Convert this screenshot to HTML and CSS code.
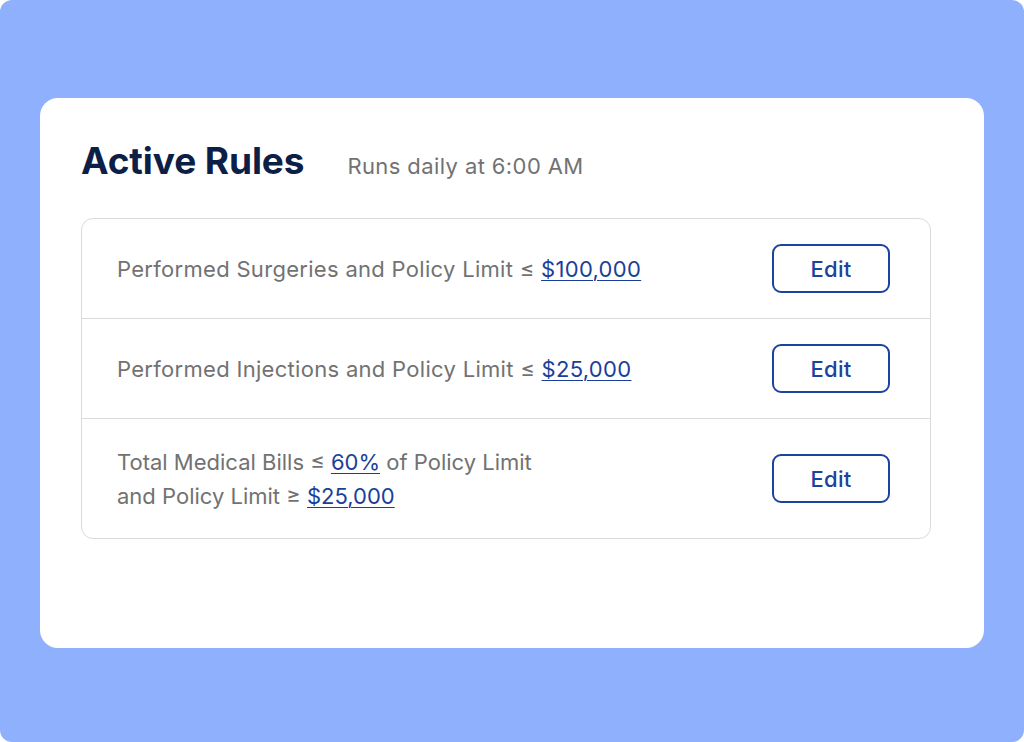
FILE: index.html
```html
<!DOCTYPE html>
<html>
<head>
<meta charset="utf-8">
<link rel="stylesheet" href="styles.css">
</head>
<body>
<div class="stage">
  <div class="card">
    <div class="header">
      <h1 class="title">Active Rules</h1>
      <span class="subtitle">Runs daily at 6:00 AM</span>
    </div>
    <div class="rules">
      <div class="rule">
        <div class="rule-text">Performed Surgeries and Policy Limit ≤ <a class="val">$100,000</a></div>
        <button class="edit">Edit</button>
      </div>
      <div class="rule">
        <div class="rule-text">Performed Injections and Policy Limit ≤ <a class="val">$25,000</a></div>
        <button class="edit">Edit</button>
      </div>
      <div class="rule rule-tall">
        <div class="rule-text rule-text-multi">Total Medical Bills ≤ <a class="val">60%</a> of Policy Limit<br>and Policy Limit ≥ <a class="val">$25,000</a></div>
        <button class="edit">Edit</button>
      </div>
    </div>
  </div>
</div>
</body>
</html>
```
FILE: styles.css
```css
html, body {
  margin: 0;
  padding: 0;
  background: #ffffff;
}
body {
  font-family: Inter, "Noto Sans", sans-serif;
}
.stage {
  width: 1024px;
  height: 742px;
  background: #8fb0fc;
  border-radius: 12px;
  box-sizing: border-box;
  padding: 98px 40px 0 40px;
}
.card {
  background: #ffffff;
  border-radius: 18px;
  height: 550px;
  box-sizing: border-box;
  padding: 0 53px 0 41px;
}
.header {
  display: flex;
  align-items: baseline;
  height: 120px;
  box-sizing: border-box;
  padding-top: 40px;
}
.title {
  margin: 0;
  font-size: 37px;
  line-height: 45px;
  font-weight: 700;
  color: #0c2047;
  letter-spacing: -0.1px;
}
.subtitle {
  margin-left: 43px;
  font-size: 22px;
  color: #727272;
  letter-spacing: 0.4px;
}
.rules {
  border: 1px solid #dadada;
  border-radius: 12px;
}
.rule {
  display: flex;
  align-items: center;
  justify-content: space-between;
  height: 100px;
  box-sizing: border-box;
  padding: 0 40px 0 35px;
  border-bottom: 1px solid #dadada;
}
.rule:last-child {
  border-bottom: none;
}
.rule-tall {
  height: 119px;
}
.rule-text {
  font-size: 22px;
  color: #727272;
  line-height: 34px;
  letter-spacing: 0.3px;
}
.rule-text-multi {
  letter-spacing: 0;
}
.val {
  color: #1b3f99;
  text-decoration: underline;
  text-underline-offset: 3px;
  text-decoration-thickness: 1px;
}
.edit {
  width: 118px;
  height: 49px;
  border: 2px solid #1c439d;
  border-radius: 9px;
  background: #ffffff;
  color: #1c439d;
  font-family: Inter, "Noto Sans", sans-serif;
  font-size: 22px;
  font-weight: 500;
  letter-spacing: 0.3px;
}
```
